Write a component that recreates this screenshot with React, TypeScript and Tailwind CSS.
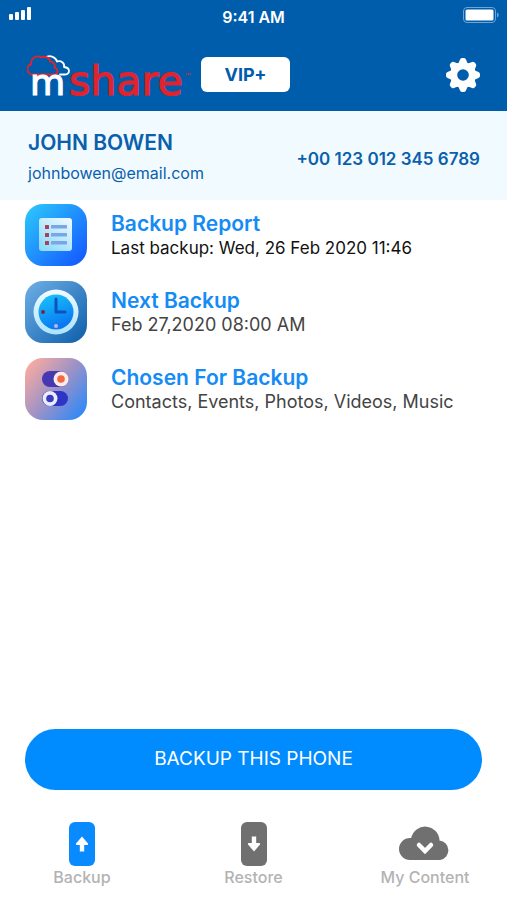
import type { ReactNode } from "react"

function StatusBar() {
	return (
		<div className="grid grid-cols-3 items-start h-[34px] px-2 pt-[7px] text-white">
			<svg width="25" height="14" viewBox="0 0 25 14" fill="currentColor">
				<rect x="1" y="7" width="4" height="6" rx="1" />
				<rect x="7" y="5" width="4" height="8" rx="1" />
				<rect x="13" y="3" width="4" height="10" rx="1" />
				<rect x="19" y="0" width="4" height="13" rx="1" />
			</svg>
			<div className="text-center text-[16px] leading-[20px] font-semibold">
				9:41 AM
			</div>
			<svg
				className="justify-self-end"
				width="36"
				height="16"
				viewBox="0 0 36 16"
			>
				<rect
					x="0.5"
					y="0.5"
					width="32"
					height="15"
					rx="3.5"
					fill="none"
					stroke="#6fa5d6"
				/>
				<rect x="2.5" y="2.5" width="28" height="11" rx="1.5" fill="#fff" />
				<path d="M34 5.5c2.2 1 2.2 4 0 5z" fill="#6fa5d6" />
			</svg>
		</div>
	)
}

function Logo() {
	return (
		<svg
			className="shrink-0"
			width="168"
			height="60"
			viewBox="0 -3 168 60"
			role="img"
			aria-label="mshare"
		>
			<g fill="none" strokeWidth="1.8" strokeLinejoin="round" strokeLinecap="round">
				<path
					d="M19.5 9C23 7 29 9 30 13.5C34 12 38 15 37 19C44 20 43 26 38 26.5H33"
					stroke="#fff"
				/>
				<path
					d="M5 26.5C-1 25.5-1 17.5 4 16.5C4 9 10 7 14 9.5C18 7.5 23 10 23 13.5C27 14 28.5 17 27.5 19.5C32 21.5 31 26.5 27 26.5Z"
					stroke="#e0232e"
				/>
			</g>
			<text
				x="3"
				y="47"
				fill="#fff"
				stroke="#fff"
				strokeWidth="1.2"
				fontSize="36"
				fontFamily="DejaVu Sans"
			>
				m
			</text>
			<text
				x="42"
				y="47"
				fill="#e0232e"
				stroke="#e0232e"
				strokeWidth="1.2"
				fontSize="41"
				fontFamily="DejaVu Sans"
			>
				share
			</text>
			<text x="158" y="32" fill="#e0232e" fontSize="9" fontFamily="Inter">
				™
			</text>
		</svg>
	)
}

function GearIcon() {
	return (
		<svg width="34" height="34" viewBox="0 0 34 34" fill="#fff">
			<mask id="gearHole">
				<rect width="34" height="34" fill="#fff" />
				<circle cx="17" cy="17" r="5.8" fill="#000" />
			</mask>
			<g mask="url(#gearHole)">
				<circle cx="17" cy="17" r="13" />
				{[0, 45, 90, 135, 180, 225, 270, 315].map((angle) => (
					<path
						key={angle}
						d="M12 6.5 13.8 2Q14.5 0 16 0h2q1.5 0 2.2 2L22 6.5z"
						transform={`rotate(${angle} 17 17)`}
					/>
				))}
			</g>
		</svg>
	)
}

function ReportIcon() {
	return (
		<svg className="shrink-0" width="62" height="62" viewBox="0 0 62 62">
			<defs>
				<linearGradient id="reportBg" x1="0" y1="0" x2="1" y2="1">
					<stop offset="0" stopColor="#2ccbfb" />
					<stop offset="1" stopColor="#1452ff" />
				</linearGradient>
				<linearGradient id="reportPage" x1="1" y1="0" x2="0.3" y2="1">
					<stop offset="0" stopColor="#f4fbff" />
					<stop offset="1" stopColor="#8fdcfd" />
				</linearGradient>
			</defs>
			<rect width="62" height="62" rx="18" fill="url(#reportBg)" />
			<rect x="14" y="14" width="33" height="33" rx="3" fill="url(#reportPage)" />
			{[21, 29, 37].map((y) => (
				<g key={y}>
					<rect x="20" y={y} width="4" height="4" rx="0.5" fill="#a84152" />
					<rect x="26" y={y} width="16" height="3.5" rx="0.5" fill="#7ba5e4" />
				</g>
			))}
		</svg>
	)
}

function ClockIcon() {
	return (
		<svg className="shrink-0" width="62" height="62" viewBox="0 0 62 62">
			<defs>
				<linearGradient id="clockBg" x1="0" y1="0" x2="1" y2="1">
					<stop offset="0" stopColor="#6fb0e6" />
					<stop offset="1" stopColor="#0c5eaa" />
				</linearGradient>
				<linearGradient id="clockRim" x1="0" y1="0" x2="0" y2="1">
					<stop offset="0" stopColor="#f2faff" />
					<stop offset="1" stopColor="#a9e4fc" />
				</linearGradient>
				<linearGradient id="clockFace" x1="0" y1="0" x2="0.4" y2="1">
					<stop offset="0" stopColor="#19c8fb" />
					<stop offset="1" stopColor="#0a78f2" />
				</linearGradient>
			</defs>
			<rect width="62" height="62" rx="18" fill="url(#clockBg)" />
			<circle cx="31" cy="31" r="22.5" fill="url(#clockRim)" />
			<circle cx="31" cy="31" r="17.5" fill="url(#clockFace)" />
			<path
				d="M31 18v13h9"
				fill="none"
				stroke="#0a55bd"
				strokeWidth="3"
				strokeLinecap="round"
				strokeLinejoin="round"
			/>
			<circle cx="18" cy="31" r="2" fill="#7a2450" />
			<circle cx="31" cy="45" r="2" fill="#c7b4e2" />
		</svg>
	)
}

function TogglesIcon() {
	return (
		<svg className="shrink-0" width="62" height="62" viewBox="0 0 62 62">
			<defs>
				<linearGradient id="togglesBg" x1="0" y1="0.1" x2="1" y2="0.9">
					<stop offset="0" stopColor="#ffac9f" />
					<stop offset="0.5" stopColor="#9d92c6" />
					<stop offset="1" stopColor="#2788fb" />
				</linearGradient>
			</defs>
			<rect width="62" height="62" rx="18" fill="url(#togglesBg)" />
			<rect x="17" y="13" width="26" height="16" rx="8" fill="#4538b2" />
			<circle cx="36" cy="21" r="7.5" fill="#ffece4" />
			<circle cx="36" cy="21" r="3.8" fill="#f4684a" />
			<rect x="17" y="33" width="26" height="15" rx="7.5" fill="#2e35c4" />
			<circle cx="25" cy="40.5" r="7.5" fill="#e9edff" />
			<circle cx="25" cy="40.5" r="3.8" fill="#3c3bc0" />
		</svg>
	)
}

function PhoneIcon({ down }: { down?: boolean }) {
	return (
		<svg width="26" height="44" viewBox="0 0 26 44">
			<rect width="26" height="44" rx="6" fill="currentColor" />
			<path
				d="M13 14.5 19 21.5q.5 1.5-1 1.5h-2.8v6.5h-4.4V23H8q-1.5 0-1-1.5z"
				fill="#fff"
				transform={down ? "rotate(180 13 22)" : undefined}
			/>
		</svg>
	)
}

function CloudIcon() {
	return (
		<svg width="52" height="44" viewBox="0 0 52 44">
			<path
				d="M11 38A11 11 0 0 1 11 16H12.2A14.3 14.3 0 0 1 40.5 18.4A9.9 9.9 0 0 1 41.200 38z"
				fill="currentColor"
			/>
			<path
				d="M20 23 26 29 32 23"
				fill="none"
				stroke="#fff"
				strokeWidth="4.5"
				strokeLinecap="round"
			/>
		</svg>
	)
}

function Row({
	icon,
	title,
	children
}: {
	icon: ReactNode
	title: string
	children: ReactNode
}) {
	return (
		<li className="flex items-start gap-6">
			{icon}
			<div className="pt-[7px] leading-[24px]">
				<h2 className="text-[21px] leading-[25px] font-semibold text-[#148bf5]">
					{title}
				</h2>
				{children}
			</div>
		</li>
	)
}

function Tab({
	icon,
	label,
	color
}: {
	icon: ReactNode
	label: string
	color: string
}) {
	return (
		<button className={`flex flex-col items-center w-[114px] ${color}`}>
			{icon}
			<span className="text-[16px] leading-[22px] font-medium text-[#b3b3b3]">
				{label}
			</span>
		</button>
	)
}

export default function App() {
	return (
		<div className="flex flex-col min-h-screen bg-white font-['Inter',sans-serif]">
			<header className="bg-[#005dab]">
				<StatusBar />
				<div className="flex items-center h-[77px] px-[27px] pt-1">
					<Logo />
					<button className="ml-[6px] w-[89px] h-[35px] rounded-[6px] bg-white text-[18px] font-bold text-[#005dab]">
						VIP+
					</button>
					<button className="ml-auto" aria-label="Settings">
						<GearIcon />
					</button>
				</div>
			</header>

			<section className="flex items-center justify-between h-[89px] pl-7 pr-[27px] pt-1 bg-[#f1fbff] text-[#0b60ab]">
				<div>
					<h1 className="text-[21px] leading-[30px] font-semibold">JOHN BOWEN</h1>
					<p className="text-[16px] leading-[30px]">johnbowen@email.com</p>
				</div>
				<div className="pt-1 text-[17px] font-semibold">+00 123 012 345 6789</div>
			</section>

			<ul className="flex flex-col gap-[15px] px-[25px] pt-1">
				<Row icon={<ReportIcon />} title="Backup Report">
					<p className="text-[17px] text-[#111]">
						Last backup: Wed, 26 Feb 2020 11:46
					</p>
				</Row>
				<Row icon={<ClockIcon />} title="Next Backup">
					<p className="text-[18px] text-[#444]">Feb 27,2020 08:00 AM</p>
				</Row>
				<Row icon={<TogglesIcon />} title="Chosen For Backup">
					<p className="text-[18px] text-[#444]">
						Contacts, Events, Photos, Videos, Music
					</p>
				</Row>
			</ul>

			<div className="mt-auto px-[25px]">
				<button className="w-full h-[61px] rounded-full bg-[#008cff] text-[19px] text-white">
					BACKUP THIS PHONE
				</button>
			</div>
			<nav className="flex justify-between px-[25px] pt-8 pb-3">
				<Tab icon={<PhoneIcon />} label="Backup" color="text-[#0a8aff]" />
				<Tab icon={<PhoneIcon down />} label="Restore" color="text-[#707070]" />
				<Tab icon={<CloudIcon />} label="My Content" color="text-[#707070]" />
			</nav>
		</div>
	)
}
